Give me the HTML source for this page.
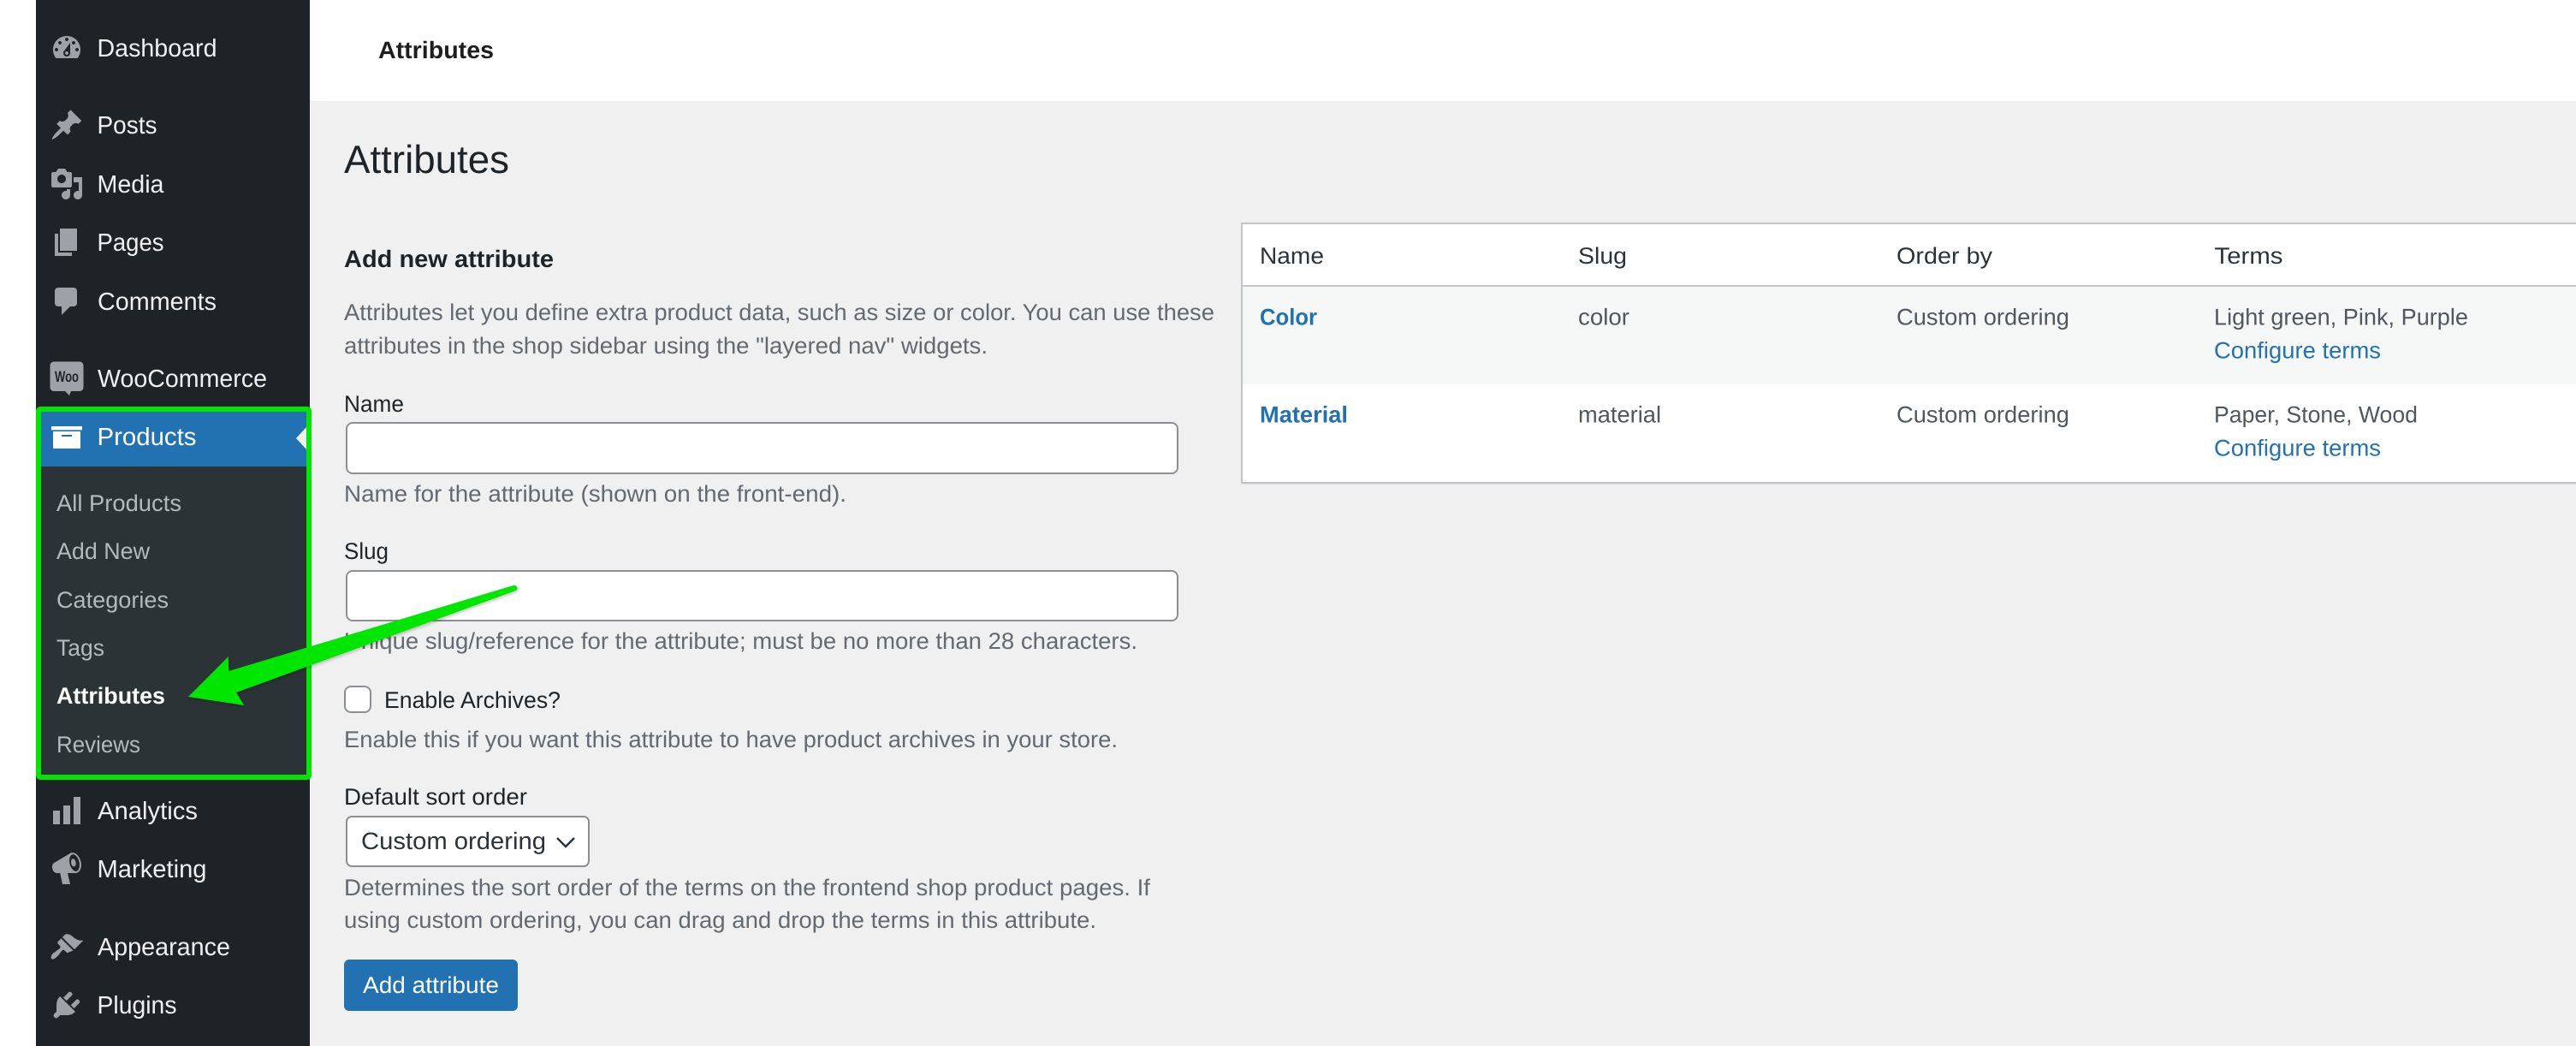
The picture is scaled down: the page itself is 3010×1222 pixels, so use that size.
<!DOCTYPE html>
<html lang="en">
<head>
<meta charset="utf-8">
<title>Attributes</title>
<style>
html,body{margin:0;padding:0;width:3010px;height:1222px;overflow:hidden;background:#f0f0f1}
svg{display:block}
text{font-family:"Liberation Sans",Arial,sans-serif;text-rendering:geometricPrecision}
.m{font-size:29px;fill:#f0f0f1}
.s{font-size:27px;fill:#b4b9be}
.h{font-size:27px;fill:#646970}
.l{font-size:27px;fill:#1d2327}
.t{font-size:27px;fill:#50575e}
.th{font-size:27px;fill:#2c3338}
.a{font-size:27px;fill:#2271b1}
.ico{fill:#9ca2a7}
</style>
</head>
<body>
<svg xmlns="http://www.w3.org/2000/svg" width="3010" height="1222" viewBox="0 0 3010 1222">
<defs>
<filter id="sh" x="-10%" y="-10%" width="120%" height="130%"><feDropShadow dx="1" dy="2" stdDeviation="1.500" flood-color="#000" flood-opacity=".22"/></filter>
</defs>
<rect width="3010" height="1222" fill="#f0f0f1"/>
<rect width="42" height="1222" fill="#fff"/>
<rect x="362" width="2648" height="118" fill="#fff"/>
<rect x="42" width="320" height="1222" fill="#1d2327"/>

<!-- sidebar -->
<rect x="45" y="478" width="316" height="430" fill="#2c3337"/>
<rect x="45" y="481" width="313" height="64" fill="#2271b1"/>
<path d="M346 512l12-13v26z" fill="#f0f0f1"/>

<path class="ico" transform="translate(58 36) scale(2)" fill-rule="evenodd" d="M3.76 16h12.48c1.1-1.37 1.76-3.11 1.76-5 0-4.42-3.58-8-8-8s-8 3.58-8 8c0 1.89.66 3.63 1.76 5zM10 4c.55 0 1 .45 1 1s-.45 1-1 1-1-.45-1-1 .45-1 1-1zM6 6c.55 0 1 .45 1 1s-.45 1-1 1-1-.45-1-1 .45-1 1-1zm8 0c.55 0 1 .45 1 1s-.45 1-1 1-1-.45-1-1 .45-1 1-1zm-5.37 5.55L12 7v6c0 1.1-.9 2-2 2s-2-.9-2-2c0-.57.24-1.08.63-1.45zM4 10c.55 0 1 .45 1 1s-.45 1-1 1-1-.45-1-1 .45-1 1-1zm12 0c.55 0 1 .45 1 1s-.45 1-1 1-1-.45-1-1 .45-1 1-1zm-5 3c0-.55-.45-1-1-1s-1 .45-1 1 .45 1 1 1 1-.45 1-1z"/>
<path class="ico" transform="translate(58 126) scale(2)" d="M10.44 3.02l1.82-1.82 6.36 6.35-1.83 1.82c-1.05-.68-2.48-.57-3.41.36l-.75.75c-.92.93-1.04 2.35-.35 3.41l-1.83 1.82-2.41-2.41-2.8 2.79c-.42.42-3.38 2.71-3.8 2.29s1.86-3.39 2.28-3.81l2.79-2.79L4.1 9.36l1.83-1.82c1.05.69 2.48.57 3.4-.36l.75-.75c.93-.92 1.05-2.35.36-3.41z"/>
<path class="ico" transform="translate(58 195) scale(2)" fill-rule="evenodd" d="M13 11V4c0-.55-.45-1-1-1h-1.67L9 1H5L3.67 3H2c-.55 0-1 .45-1 1v7c0 .55.45 1 1 1h10c.55 0 1-.45 1-1zM7 4.5c1.38 0 2.5 1.12 2.5 2.5S8.38 9.5 7 9.5 4.5 8.38 4.5 7 5.62 4.5 7 4.5zM14 6h5v10.5c0 1.38-1.12 2.5-2.5 2.5S14 17.88 14 16.5s1.12-2.5 2.5-2.5c.17 0 .34.02.5.05V9h-3V6zm-4 8.05V13h2v3.5c0 1.38-1.12 2.5-2.5 2.5S7 17.88 7 16.5 8.12 14 9.5 14c.17 0 .34.02.5.05z"/>
<path class="ico" transform="translate(58 263) scale(2)" d="M6 15V2h10v13H6zm-1 1h8v2H3V5h2v11z"/>
<path class="ico" transform="translate(58 332) scale(2)" d="M5 2h9c1.1 0 2 .9 2 2v7c0 1.1-.9 2-2 2h-2l-5 5v-5H5c-1.1 0-2-.9-2-2V4c0-1.1.9-2 2-2z"/>
<path class="ico" d="M63 422.5h30c2.5 0 4.5 2 4.5 4.5v25.5c0 2.500-2 4.500-4.500 4.500H83l-2 5-5-5H63c-2.500 0-4.500-2-4.500-4.500V427c0-2.500 2-4.500 4.500-4.500z"/>
<text x="64" y="446" font-size="18" font-weight="700" fill="#1d2327" textLength="28" lengthAdjust="spacingAndGlyphs">Woo</text>
<path transform="translate(58 490) scale(2)" fill="#fff" fill-rule="evenodd" d="M19 4v2.200H1V4h18zM2 7h16v10H2V7zm11 2v1H7V9h6z"/>
<g class="ico"><rect x="62" y="947" width="8" height="16"/><rect x="74" y="941" width="8" height="22"/><rect x="86" y="931" width="8" height="32"/></g>
<path class="ico" transform="translate(58 994) scale(2)" fill-rule="evenodd" d="M18.15 5.940c.46 1.620.38 3.220-.02 4.480-.42 1.280-1.260 2.180-2.300 2.480-.16.06-.26.06-.4.06-.06.02-.12.02-.18.02-.06.02-.14.02-.22.02H10.500l1.500 6.500H7.500l-1.400-6.500H4.250c-.5.06-1.080-.18-1.540-.62s-.88-1.080-1.060-1.880c-.24-.8-.2-1.560-.02-2.200.18-.62.58-1.080 1.060-1.300l9-5.400c.1-.06.18-.1.24-.16.16-.12.46-.24.740-.3 1.040-.3 2.240.1 3.220 1 .98.880 1.800 2.240 2.260 3.860zm-2.580 5.980c.4-.1.740-.34 1.040-.7.58-.7.860-1.760.860-3.040-.02-.64-.1-1.300-.28-1.980-.34-1.360-1.020-2.500-1.780-3.240-.38-.38-.8-.64-1.180-.78-.28-.1-.56-.12-.84-.06-.38.1-.72.34-1.020.7-.58.72-.86 1.780-.84 3.040 0 .64.08 1.300.26 1.980.34 1.340 1 2.480 1.780 3.220.38.38.8.64 1.180.78.28.1.56.1.84.08zM13.300 4.700c.8-.3 1.650.6 1.950 1.850.25 1.150 0 2.250-.7 2.600-.8.3-1.650-.55-1.950-1.800-.25-1.200 0-2.350.7-2.650z"/>
<path class="ico" transform="translate(58 1087) scale(2)" d="M14.480 11.060L7.410 3.990l1.500-1.500c.5-.56 2.300-.47 3.510.32 1.210.8 1.430 1.280 2.910 2.100 1.180.64 2.450 1.260 4.450.85zm-.71.71L6.700 4.700 4.930 6.470c-.39.39-.39 1.020 0 1.410l1.060 1.060c.39.39.39 1.030 0 1.420-.6.6-1.430 1.110-2.210 1.690-.35.26-.7.53-1.010.84C1.430 13.230.28 15.750 1.100 16.570c.82.82 2.340-.33 3.680-1.670.31-.31.58-.66.85-1.010.57-.78 1.080-1.610 1.690-2.210.39-.39 1.020-.39 1.410 0l1.060 1.060c.39.39 1.020.39 1.410 0z"/>
<path class="ico" transform="translate(58 1154) scale(2)" d="M13.110 4.360L9.870 7.600 8 5.730l3.240-3.240c.35-.34 1.050-.2 1.560.32.52.51.66 1.210.31 1.550zm-8 1.770l.91-1.120 9.010 9.010-1.190.84c-.71.71-2.630 1.160-3.820 1.160H6.140L4.900 17.260c-.59.59-1.540.59-2.120 0-.59-.58-.59-1.530 0-2.120l1.240-1.240v-3.880c0-1.130.4-3.190 1.090-3.890zm7.260 3.970l3.240-3.240c.34-.35 1.040-.21 1.550.31.52.51.66 1.210.31 1.550l-3.240 3.250z"/>

<text class="m" x="113.500" y="66" textLength="140" lengthAdjust="spacingAndGlyphs">Dashboard</text>
<text class="m" x="113.500" y="156" textLength="70" lengthAdjust="spacingAndGlyphs">Posts</text>
<text class="m" x="113.500" y="225" textLength="78" lengthAdjust="spacingAndGlyphs">Media</text>
<text class="m" x="113.500" y="293" textLength="78" lengthAdjust="spacingAndGlyphs">Pages</text>
<text class="m" x="114" y="362" textLength="139" lengthAdjust="spacingAndGlyphs">Comments</text>
<text class="m" x="114" y="452" textLength="198" lengthAdjust="spacingAndGlyphs">WooCommerce</text>
<text class="m" x="113.500" y="520" textLength="116" lengthAdjust="spacingAndGlyphs" style="fill:#fff">Products</text>
<text class="s" x="66" y="597" textLength="146" lengthAdjust="spacingAndGlyphs">All Products</text>
<text class="s" x="66" y="653" textLength="109" lengthAdjust="spacingAndGlyphs">Add New</text>
<text class="s" x="66" y="710" textLength="131" lengthAdjust="spacingAndGlyphs">Categories</text>
<text class="s" x="66" y="766" textLength="56" lengthAdjust="spacingAndGlyphs">Tags</text>
<text class="s" x="66" y="822" textLength="127" lengthAdjust="spacingAndGlyphs" font-weight="700" style="fill:#fff">Attributes</text>
<text class="s" x="66" y="879" textLength="98" lengthAdjust="spacingAndGlyphs">Reviews</text>
<text class="m" x="114" y="957" textLength="117" lengthAdjust="spacingAndGlyphs">Analytics</text>
<text class="m" x="113.500" y="1025" textLength="128" lengthAdjust="spacingAndGlyphs">Marketing</text>
<text class="m" x="114" y="1116" textLength="155" lengthAdjust="spacingAndGlyphs">Appearance</text>
<text class="m" x="113.500" y="1184" textLength="93" lengthAdjust="spacingAndGlyphs">Plugins</text>

<!-- header -->
<text x="442" y="68" font-size="28" font-weight="700" fill="#1e1e1e" textLength="135" lengthAdjust="spacingAndGlyphs">Attributes</text>
<text x="402" y="202" font-size="46" fill="#1d2327" textLength="193" lengthAdjust="spacingAndGlyphs">Attributes</text>

<!-- form -->
<text x="402" y="312" font-size="28" font-weight="700" fill="#1d2327" textLength="245" lengthAdjust="spacingAndGlyphs">Add new attribute</text>
<text class="h" x="402" y="374" textLength="1017" lengthAdjust="spacingAndGlyphs">Attributes let you define extra product data, such as size or color. You can use these</text>
<text class="h" x="402" y="413" textLength="752" lengthAdjust="spacingAndGlyphs">attributes in the shop sidebar using the "layered nav" widgets.</text>
<text class="l" x="402" y="481" textLength="70" lengthAdjust="spacingAndGlyphs">Name</text>
<rect x="405" y="494" width="971" height="59" rx="7" fill="#fff" stroke="#8c8f94" stroke-width="2"/>
<text class="h" x="402" y="586" textLength="587" lengthAdjust="spacingAndGlyphs">Name for the attribute (shown on the front-end).</text>
<text class="l" x="402" y="653" textLength="52" lengthAdjust="spacingAndGlyphs">Slug</text>
<rect x="405" y="667" width="971" height="58" rx="7" fill="#fff" stroke="#8c8f94" stroke-width="2"/>
<text class="h" x="402" y="758" textLength="927" lengthAdjust="spacingAndGlyphs">Unique slug/reference for the attribute; must be no more than 28 characters.</text>
<rect x="403" y="802" width="30" height="30" rx="7" fill="#fff" stroke="#8c8f94" stroke-width="2"/>
<text class="l" x="449" y="827" textLength="206" lengthAdjust="spacingAndGlyphs">Enable Archives?</text>
<text class="h" x="402" y="873" textLength="904" lengthAdjust="spacingAndGlyphs">Enable this if you want this attribute to have product archives in your store.</text>
<text class="l" x="402" y="940" textLength="214" lengthAdjust="spacingAndGlyphs">Default sort order</text>
<rect x="405" y="954" width="283" height="58" rx="6" fill="#fff" stroke="#8c8f94" stroke-width="2"/>
<text x="422" y="992" font-size="28" fill="#2c3338" textLength="216" lengthAdjust="spacingAndGlyphs">Custom ordering</text>
<path d="M651 979l10 10 10-10" fill="none" stroke="#2c3338" stroke-width="2.400"/>
<text class="h" x="402" y="1046" textLength="942" lengthAdjust="spacingAndGlyphs">Determines the sort order of the terms on the frontend shop product pages. If</text>
<text class="h" x="402" y="1084" textLength="879" lengthAdjust="spacingAndGlyphs">using custom ordering, you can drag and drop the terms in this attribute.</text>
<rect x="402" y="1121" width="203" height="60" rx="6" fill="#2271b1"/>
<text x="424" y="1160" font-size="27" fill="#fff" textLength="159" lengthAdjust="spacingAndGlyphs">Add attribute</text>

<!-- table -->
<rect x="1450" y="260" width="1560" height="305" fill="#fff"/>
<rect x="1452" y="335" width="1558" height="114" fill="#f6f7f7"/>
<g fill="#c3c4c7">
<rect x="1450" y="260" width="1560" height="2"/>
<rect x="1450" y="333" width="1560" height="2"/>
<rect x="1450" y="563" width="1560" height="2"/>
<rect x="1450" y="260" width="2" height="305"/>
</g>
<rect x="1450" y="565" width="1560" height="1" fill="#dedee0"/>
<text class="th" x="1472" y="308" textLength="75" lengthAdjust="spacingAndGlyphs">Name</text>
<text class="th" x="1844" y="308" textLength="57" lengthAdjust="spacingAndGlyphs">Slug</text>
<text class="th" x="2216" y="308" textLength="112" lengthAdjust="spacingAndGlyphs">Order by</text>
<text class="th" x="2587.500" y="308" textLength="80" lengthAdjust="spacingAndGlyphs">Terms</text>

<text class="a" x="1472" y="379.500" font-weight="700" textLength="67" lengthAdjust="spacingAndGlyphs">Color</text>
<text class="t" x="1844" y="379.500" textLength="60" lengthAdjust="spacingAndGlyphs">color</text>
<text class="t" x="2216" y="379.500" textLength="202" lengthAdjust="spacingAndGlyphs">Custom ordering</text>
<text class="t" x="2587" y="379.500" textLength="297" lengthAdjust="spacingAndGlyphs">Light green, Pink, Purple</text>
<text class="a" x="2587" y="418.500" textLength="195" lengthAdjust="spacingAndGlyphs">Configure terms</text>

<text class="a" x="1472" y="493.500" font-weight="700" textLength="103" lengthAdjust="spacingAndGlyphs">Material</text>
<text class="t" x="1844" y="493.500" textLength="97" lengthAdjust="spacingAndGlyphs">material</text>
<text class="t" x="2216" y="493.500" textLength="202" lengthAdjust="spacingAndGlyphs">Custom ordering</text>
<text class="t" x="2587" y="493.500" textLength="238" lengthAdjust="spacingAndGlyphs">Paper, Stone, Wood</text>
<text class="a" x="2587" y="532.500" textLength="195" lengthAdjust="spacingAndGlyphs">Configure terms</text>

<!-- annotation -->
<rect x="45" y="478" width="316" height="430" rx="2" fill="none" stroke="#00e600" stroke-width="6"/>
<g filter="url(#sh)" fill="#00e600">
<path d="M220 814L266.700 767.300 267.300 784 599.500 684Q603 683.500 604.500 686.500 605 689 602.500 690L276 809 285.300 824z"/>
</g>
</svg>
</body>
</html>
